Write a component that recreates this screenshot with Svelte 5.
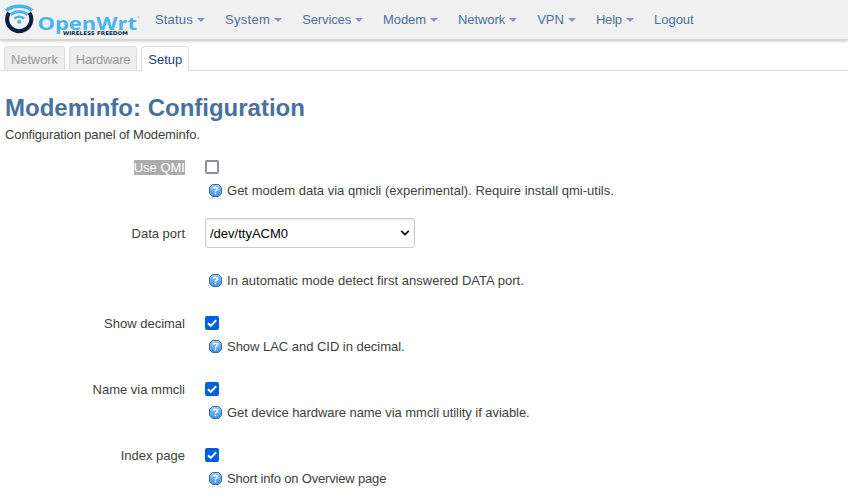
<script>
  const menu = [
    { text: 'Status', track: 0.17 },
    { text: 'System', track: 0.33 },
    { text: 'Services', track: -0.12 },
    { text: 'Modem', track: -0.1 },
    { text: 'Network', track: -0.07 },
    { text: 'VPN', track: 0 },
    { text: 'Help', track: -0.17 },
    { text: 'Logout', track: 0 }
  ];
  const tabs = [
    { text: 'Network', track: -0.12 },
    { text: 'Hardware', track: -0.24 },
    { text: 'Setup', track: 0 }
  ];
  const rows = [
    { label: 'Use QMI', type: 'check', on: false, selected: true, track: 0.015, help: 'Get modem data via qmicli (experimental). Require install qmi-utils.' },
    { label: 'Data port', type: 'select', track: 0.02, help: 'In automatic mode detect first answered DATA port.' },
    { label: 'Show decimal', type: 'check', on: true, track: -0.03, help: 'Show LAC and CID in decimal.' },
    { label: 'Name via mmcli', type: 'check', on: true, track: -0.055, help: 'Get device hardware name via mmcli utility if aviable.' },
    { label: 'Index page', type: 'check', on: true, track: -0.18, help: 'Short info on Overview page' }
  ];
</script>

<header>
  <svg class="logo" width="136" height="36" viewBox="0 0 136 36" aria-label="OpenWrt">
    <g fill="none">
      <path d="M3.9 12.8A12.1 12.1 0 1 0 24.5 12.8" stroke="#081f42" stroke-width="4" />
      <path d="M1.2 10.6C7.4 4.9 21 4.9 27.2 10.6" stroke="#46b5f0" stroke-width="3.5" />
      <path d="M5.6 14.6C10 10.6 18.4 10.6 22.8 14.6" stroke="#46b5f0" stroke-width="2.8" />
      <path d="M9.3 18.6C12 16 16.4 16 19.1 18.6" stroke="#46b5f0" stroke-width="2.4" />
    </g>
    <circle cx="14.2" cy="21.8" r="2" fill="#46b5f0" />
    <text class="brand" x="32.5" y="30" textLength="99.5" lengthAdjust="spacingAndGlyphs">OpenWrt</text>
    <text class="motto" x="58" y="35" textLength="65" lengthAdjust="spacingAndGlyphs">WIRELESS FREEDOM</text>
    <circle cx="133.5" cy="17" r=".9" fill="#8bcdf0" />
  </svg>
  <nav>
    {#each menu as item}
      <a href="#top" class:drop={item.text !== 'Logout'} style="letter-spacing: {item.track}px">{item.text}</a>
    {/each}
  </nav>
</header>

<ul class="tabs">
  {#each tabs as tab}
    <li class:active={tab.text === 'Setup'} style="letter-spacing: {tab.track}px">{tab.text}</li>
  {/each}
</ul>

<main>
  <h2>Modeminfo: Configuration</h2>
  <p>Configuration panel of Modeminfo.</p>
  {#each rows as row}
    <div class="row" class:tall={row.type === 'select'}>
      <div class="label"><span class:selected={row.selected}>{row.label}</span></div>
      <div class="field">
        {#if row.type === 'select'}
          <div class="select">
            <span>/dev/ttyACM0</span>
            <svg width="10" height="8" viewBox="0 0 10 8"><path d="M1.2 1.8 5 5.6 8.8 1.8" fill="none" stroke="#111" stroke-width="1.7" /></svg>
          </div>
        {:else}
          <div class="check" class:on={row.on}>
            {#if row.on}
              <svg width="14" height="14" viewBox="0 0 14 14"><path d="M3 7.2 5.7 9.9 11.2 4.2" fill="none" stroke="#fff" stroke-width="2" /></svg>
            {/if}
          </div>
        {/if}
        <div class="help">
          <svg width="13" height="13" viewBox="0 0 13 13">
            <defs><linearGradient id="blue" x1="0" y1="0" x2="0" y2="1"><stop offset="0" stop-color="#9dcdf5" /><stop offset="1" stop-color="#3c91dc" /></linearGradient></defs>
            <path d="M3.5 .5H9.5L12.5 3.5V9.5L9.5 12.5H3.5L.5 9.5V3.5Z" fill="url(#blue)" stroke="#386ea3" />
            <path d="M4.5 4.6C4.6 2.9 8.5 2.8 8.5 4.9 8.5 6.2 6.5 6.1 6.5 7.8M6.5 8.8V10.2" fill="none" stroke="#fff" stroke-width="1.4" />
          </svg>
          <span style="letter-spacing: {row.track}px">{row.help}</span>
        </div>
      </div>
    </div>
  {/each}
</main>

<style>
  :global(body) {
    margin: 0;
    overflow: hidden;
    background: #fff;
    color: #404040;
    font: 13px/18px "Liberation Sans", Arial, sans-serif;
  }
  header {
    display: flex;
    height: 39px;
    padding-left: 5px;
    background: #f1f1f1;
    border-bottom: 1px solid #d2d2d2;
    box-shadow: 0 1px 3px rgba(0, 0, 0, .25);
  }
  .logo { flex: none; margin-right: 4px; }
  .brand { font: bold 17.5px "Open Sans", sans-serif; fill: #46b5f0; }
  .motto { font: bold 5.2px "DejaVu Sans", sans-serif; fill: #081f42; }
  nav { display: flex; padding-top: 11px; }
  nav a {
    display: flex;
    height: 18px;
    padding: 0 10px;
    color: #4871a0;
    text-decoration: none;
  }
  .drop::after {
    content: "";
    width: 0;
    height: 0;
    margin: 7px 0 0 4px;
    border: 4px solid transparent;
    border-top-color: #8795c2;
    border-bottom: 0;
  }
  .tabs {
    display: flex;
    gap: 4px;
    height: 24px;
    margin: 6px 0 0;
    padding: 0 4px;
    list-style: none;
    border-bottom: 1px solid #ddd;
  }
  .tabs li {
    box-sizing: border-box;
    height: 24px;
    padding: 4px 6px 0;
    border: 1px solid #ddd;
    border-bottom: 0;
    border-radius: 4px 4px 0 0;
    background: #eee;
    color: #999;
  }
  .tabs .active { height: 25px; background: #fff; color: #1f4082; }
  main { padding: 19px 5px 0; }
  h2 { margin: 0; font-size: 24px; line-height: 36px; color: #4871a0; }
  p { margin: 0 0 14px; letter-spacing: -.12px; }
  .row { display: flex; height: 60px; }
  .row.tall { height: 96px; }
  .row:not(.tall) ~ .row:not(.tall) { height: 66px; }
  .label { width: 180px; padding-top: 1px; text-align: right; }
  .selected { background: #acacac; color: #fff; }
  .field { margin-left: 20px; }
  .check {
    box-sizing: border-box;
    width: 14px;
    height: 14px;
    margin: 2px 0 8px;
    border: 2px solid #8f8f9d;
    border-radius: 2px;
    background: #fff;
  }
  .check.on { border: 0; background: #0060df; }
  .check svg { display: block; }
  .help { display: flex; align-items: center; padding-left: 4px; white-space: nowrap; }
  .help svg { margin: -2px 5px 0 0; }
  .tall .label { padding-top: 7px; }
  .select {
    box-sizing: border-box;
    display: flex;
    align-items: center;
    justify-content: space-between;
    width: 210px;
    height: 30px;
    margin-bottom: 24px;
    padding: 0 4px;
    border: 1px solid #ccc;
    border-radius: 3px;
    box-shadow: inset 0 1px 3px rgba(0, 0, 0, .1);
    color: #000;
  }
  .select span { padding-top: 2px; }
</style>
